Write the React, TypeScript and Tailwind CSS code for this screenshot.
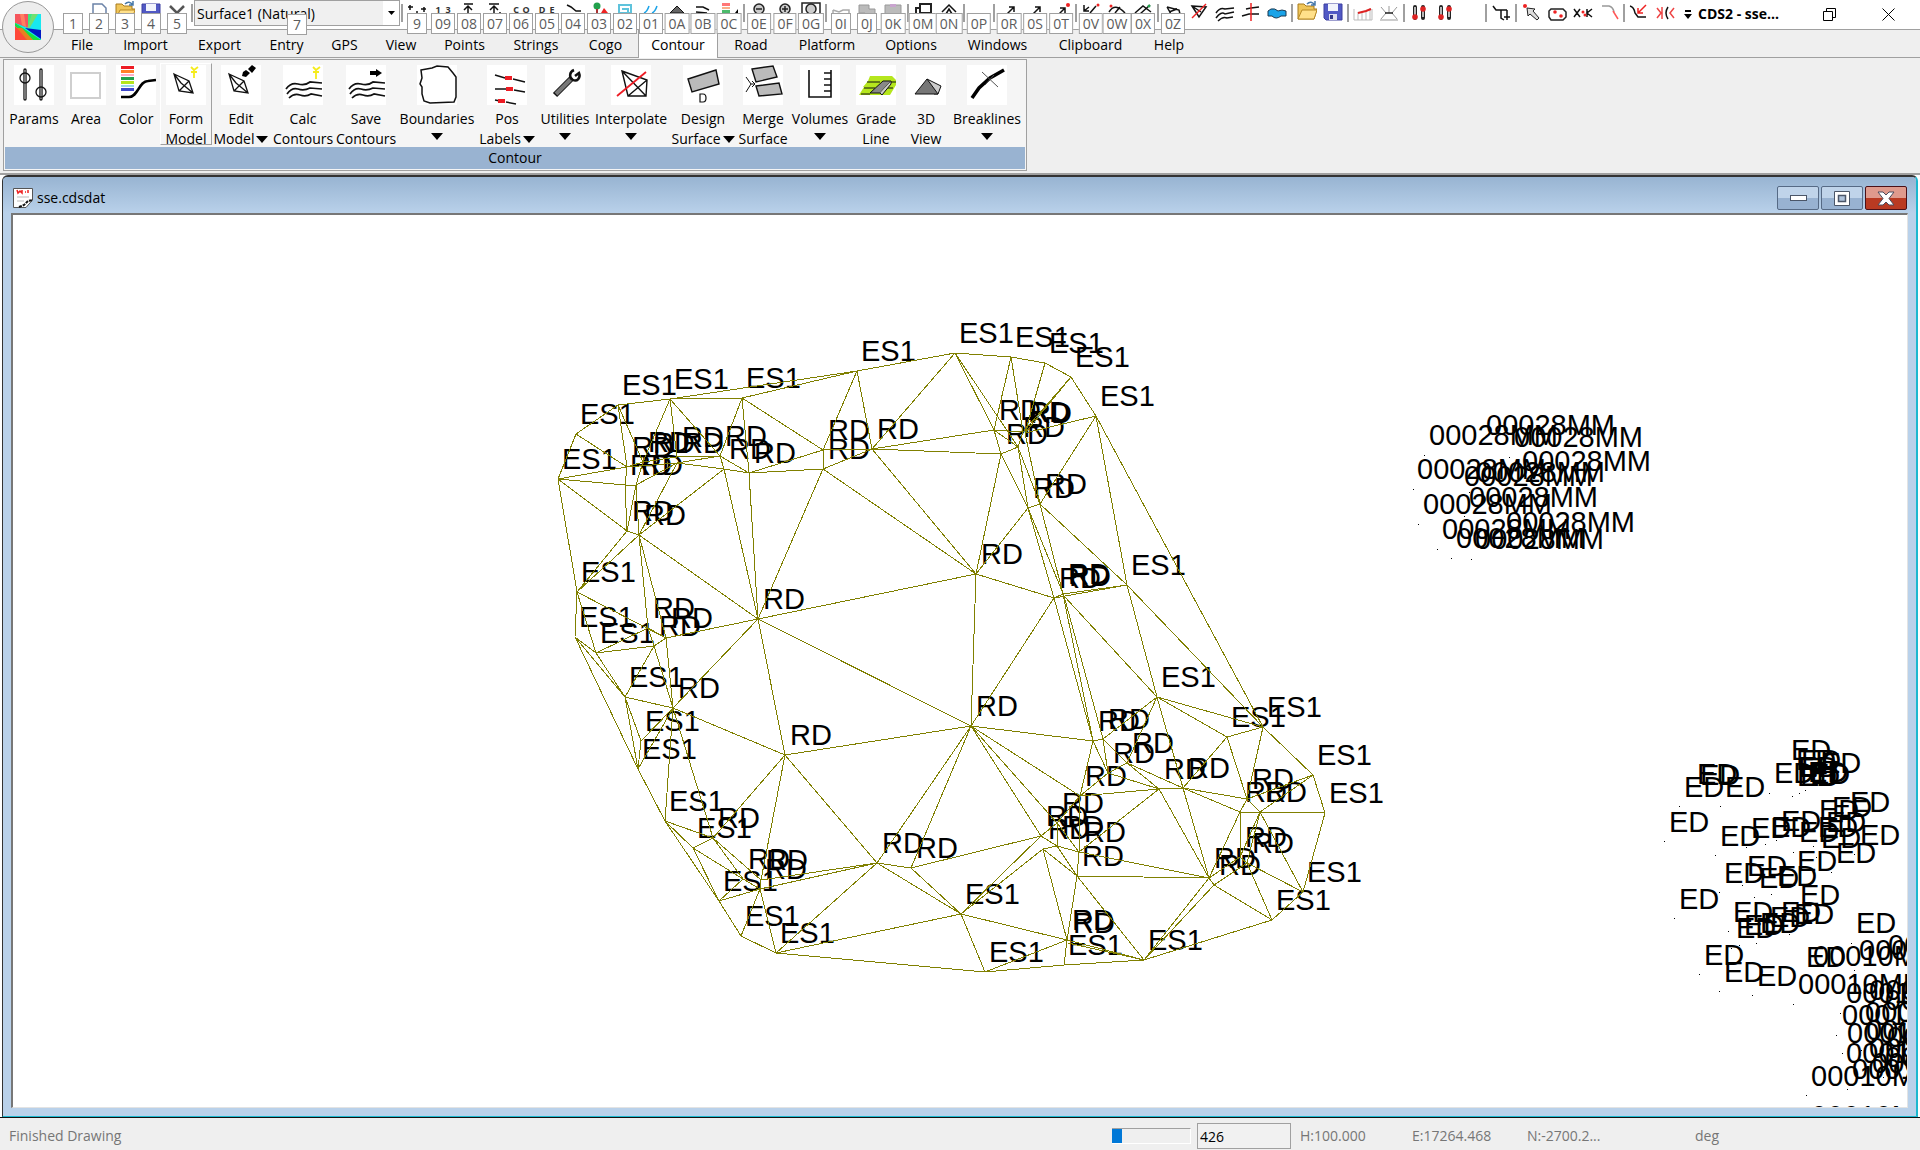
import type { ReactNode } from "react";

type Point = [number, number];

const tabs = [
  { label: "File", width: "w-[52px]" },
  { label: "Import", width: "w-[75px]" },
  { label: "Export", width: "w-[73px]" },
  { label: "Entry", width: "w-[61px]" },
  { label: "GPS", width: "w-[55px]" },
  { label: "View", width: "w-[58px]" },
  { label: "Points", width: "w-[69px]" },
  { label: "Strings", width: "w-[74px]" },
  { label: "Cogo", width: "w-[65px]" },
  { label: "Contour", width: "w-20", active: true },
  { label: "Road", width: "w-[66px]" },
  { label: "Platform", width: "w-[86px]" },
  { label: "Options", width: "w-[82px]" },
  { label: "Windows", width: "w-[91px]" },
  { label: "Clipboard", width: "w-[95px]" },
  { label: "Help", width: "w-[62px]" },
];

const Diamond = () => (
  <path d="M8 9L23 16L27 28L13 26ZM13 26L23 16M15 18L27 28M8 9L15 18" stroke="#111" strokeWidth="1.3" fill="none" />
);

const Contours = () => (
  <path
    d="M3 24Q8 17 15 19T27 17L39 18M4 29Q9 22 15 24T27 23L39 24M6 33Q11 28 17 30T28 29L39 31"
    stroke="#111"
    strokeWidth="1.7"
    fill="none"
  />
);

const Spark = () => <path d="M30 2L33 5L37 2M33 5V14M30 7H36" stroke="#f5ec1c" strokeWidth="1.8" fill="none" />;

type Tool = { lines: string[]; width: string; arrow?: "below" | "side"; raised?: boolean; icon: ReactNode };

const tools: Tool[] = [
  {
    lines: ["Params"],
    width: "w-[52px]",
    icon: (
      <g fill="none" stroke="#111" strokeWidth="1.3">
        <path d="M11 5V34M27 5V34" stroke="#222" strokeWidth="3.4" strokeLinecap="round" />
        <path d="M11 5V34M27 5V34" stroke="#999" strokeWidth="1.4" />
        <circle cx="11" cy="13" r="5" />
        <circle cx="27" cy="27" r="5" />
      </g>
    ),
  },
  { lines: ["Area"], width: "w-[52px]", icon: <rect x="5" y="8" width="29" height="25" fill="none" stroke="#cfcfcf" strokeWidth="2" /> },
  {
    lines: ["Color"],
    width: "w-12",
    icon: (
      <>
        <rect x="5" y="1" width="13" height="3" fill="#ed1c24" />
        <rect x="5" y="5" width="13" height="3" fill="#ff7f27" />
        <rect x="5" y="9" width="13" height="2" fill="#ffaec9" />
        <rect x="5" y="12" width="13" height="3" fill="#22a04c" />
        <rect x="5" y="16" width="13" height="3" fill="#b5e61d" />
        <rect x="5" y="20" width="13" height="2" fill="#99d9ea" />
        <rect x="5" y="23" width="13" height="3" fill="#3f48cc" />
        <path d="M5 32H13C22 32 23 16 32 16L40 15" fill="none" stroke="#000" strokeWidth="2.5" />
      </>
    ),
  },
  { lines: ["Form", "Model"], width: "w-[52px]", raised: true, icon: <><Diamond /><path d="M25 2L28 5L32 2M28 5V13M25 7H31" stroke="#f5ec1c" strokeWidth="1.8" fill="none" /></> },
  {
    lines: ["Edit", "Model"],
    width: "w-[58px]",
    arrow: "side",
    icon: <><Diamond /><path d="M21 11L22 7L25 5L29 8L25 12ZM27 4L31 0L35 3L31 8Z" fill="#000" /></>,
  },
  { lines: ["Calc", "Contours"], width: "w-[66px]", icon: <><Contours /><Spark /></> },
  { lines: ["Save", "Contours"], width: "w-[60px]", icon: <><Contours /><path d="M24 6H30V4L36 8L30 12V10H24Z" fill="#000" /></> },
  {
    lines: ["Boundaries"],
    width: "w-[82px]",
    arrow: "below",
    icon: <path d="M4 5L15 3L20 1L31 2L36 8L39 12V32L37 37L13 38L7 36L5 29V22L3 19L5 13Z" fill="none" stroke="#111" strokeWidth="1.5" />,
  },
  {
    lines: ["Pos", "Labels"],
    width: "w-[58px]",
    arrow: "side",
    icon: (
      <>
        <path d="M8 10L18 13M26 14L38 17M8 24H20M27 25L38 27M8 35L13 36M19 37L29 39" stroke="#111" strokeWidth="1.5" />
        <path d="M18 11H25V15H18ZM19 22H26V26H19ZM11 34H18V38H11Z" fill="#ed1c24" />
      </>
    ),
  },
  {
    lines: ["Utilities"],
    width: "w-[58px]",
    arrow: "below",
    icon: (
      <>
        <path d="M10 30L27 13" stroke="#111" strokeWidth="6" />
        <path d="M11 29L26 14" stroke="#777" strokeWidth="4" />
        <path d="M29 5C24 7 24 13 28 15S36 13 34 8L30 11" fill="none" stroke="#111" strokeWidth="2.5" />
      </>
    ),
  },
  {
    lines: ["Interpolate"],
    width: "w-[74px]",
    arrow: "below",
    icon: (
      <>
        <path d="M11 6L36 15L35 31H17ZM11 6L35 31M17 31L36 15" fill="none" stroke="#111" strokeWidth="1.4" />
        <path d="M6 31L35 7" stroke="#ed1c24" strokeWidth="1.8" />
      </>
    ),
  },
  {
    lines: ["Design", "Surface"],
    width: "w-[70px]",
    arrow: "side",
    icon: (
      <>
        <path d="M5 14L33 5L36 19L9 27Z" fill="#bbb" stroke="#111" strokeWidth="1.4" />
        <path d="M17 29V37H20Q23 37 23 33T20 29Z" fill="none" stroke="#111" strokeWidth="1.2" />
      </>
    ),
  },
  {
    lines: ["Merge", "Surface"],
    width: "w-[50px]",
    icon: (
      <>
        <path d="M9 4L30 1L34 12L13 17ZM13 21L36 18L39 29L16 31Z" fill="#bbb" stroke="#111" strokeWidth="1.4" />
        <path d="M3 12L8 19M3 27L8 19H12M9 16L12 19L9 22" fill="none" stroke="#111" />
      </>
    ),
  },
  {
    lines: ["Volumes"],
    width: "w-16",
    arrow: "below",
    icon: <path d="M9 5V32H31V5M24 8H31M24 14H31M24 20H31M24 26H31" fill="none" stroke="#111" strokeWidth="1.6" />,
  },
  {
    lines: ["Grade", "Line"],
    width: "w-12",
    icon: (
      <>
        <path d="M14 11H36L40 15V20L34 30H3L8 22H7L12 16Z" fill="#b5e61d" />
        <path d="M11 17H24M8 23H19M5 29H14M34 17H40M31 23H37" stroke="#111" />
        <path d="M27 16H35L24 28H14Z" fill="#888" stroke="#111" />
        <path d="M35 16V19L26 30L24 28" fill="#ccc" stroke="#111" />
      </>
    ),
  },
  {
    lines: ["3D", "View"],
    width: "w-[52px]",
    icon: <><path d="M21 14L35 21L32 29L28 29Z" fill="#ccc" stroke="#111" /><path d="M21 14L9 29H32Z" fill="#777" stroke="#111" /></>,
  },
  {
    lines: ["Breaklines"],
    width: "w-[70px]",
    arrow: "below",
    icon: <><path d="M5 33L12 23L23 13L37 5" fill="none" stroke="#000" strokeWidth="3.5" /><path d="M15 7L31 22M18 20L27 10" stroke="#555" /></>,
  },
];

const DownArrow = () => (
  <svg width="12" height="7" viewBox="0 0 12 7" aria-hidden="true" className="shrink-0">
    <path d="M0 0H12L6 7Z" />
  </svg>
);

const line = (d: string, color = "#111") => <path d={d} fill="none" stroke={color} strokeWidth="1.5" />;
const FolderIcon = (
  <>
    <path d="M1 6V19H17L20 9H17V6H9L7 4H1Z" fill="#f0c65a" stroke="#a87b1c" />
    <path d="M1 19L5 10H20L17 19Z" fill="#ffe08a" stroke="#b98a25" />
    <path d="M10 4Q14 0 18 5M18 1V5H14" fill="none" stroke="#4778a8" strokeWidth="1.5" />
  </>
);
const DiskIcon = (
  <>
    <path d="M1 4H19V20H3L1 18Z" fill="#5159c4" stroke="#3c3fa0" />
    <path d="M5 4H15V11H5Z" fill="#f2f4fc" />
    <path d="M6 14H14V20H6Z" fill="#dde" />
    <path d="M7 15H10V19H7Z" fill="#33388a" />
  </>
);
const Glyph = ({ children }: { children: [string, string] }) => (
  <g textAnchor="middle" fontSize="9" fontWeight="700" fill="#333">
    <text x="5" y="13">{children[0]}</text>
    <text x="15" y="13">{children[1]}</text>
  </g>
);
const Sliders = () => (
  <>
    <path d="M6 7V18M14 7V18" stroke="#222" strokeWidth="4" strokeLinecap="round" />
    <path d="M6 7V17M14 7V17" stroke="#ddd" strokeWidth="1.6" />
    <circle cx="6" cy="17" r="2.8" fill="#d22" />
    <circle cx="14" cy="9" r="2.8" fill="#d22" />
  </>
);

type Quick = { tip?: string; name: string; icon?: ReactNode } | "sep";

const fileButtons: Quick[] = [
  { tip: "2", name: "New", icon: <path d="M4 4H13L17 8V20H4Z" fill="#fff" stroke="#6b83a8" strokeWidth="1.5" /> },
  { tip: "3", name: "Open", icon: FolderIcon },
  { tip: "4", name: "Save", icon: DiskIcon },
  { tip: "5", name: "Delete", icon: <path d="M3 6L10 13L17 6M10 13V17" fill="none" stroke="#555" strokeWidth="2.5" /> },
  "sep",
];

const quickButtons: Quick[] = [
  "sep",
  { tip: "9", name: "Points", icon: line("M1 7H6M3 5V10M14 9H19M17 7V12M9 12H11") },
  { tip: "09", name: "Point numbers", icon: <Glyph>{["1", "3"]}</Glyph> },
  { tip: "08", name: "Heights", icon: line("M5 4H14M9 6V18M5 10L9 6L13 10") },
  { tip: "07", name: "Height labels", icon: line("M4 4H14M9 6V18M5 10L9 6L13 10M15 12V16") },
  { tip: "06", name: "Codes", icon: <Glyph>{["C", "O"]}</Glyph> },
  { tip: "05", name: "Descriptions", icon: <Glyph>{["D", "E"]}</Glyph> },
  { tip: "04", name: "Strings", icon: line("M4 5L8 7L13 11H18") },
  { tip: "03", name: "Symbols", icon: <><circle cx="8" cy="6" r="3.5" fill="#22a04c" /><path d="M7 9H9V13H7Z" fill="#a33" /><path d="M15 8L19 13H12Z" fill="#e22" /></> },
  { tip: "02", name: "Image", icon: <path d="M4 5H16V13H4ZM7 9H13V13" fill="none" stroke="#5fc3dc" strokeWidth="2" /> },
  { tip: "01", name: "Water", icon: line("M3 13Q6 12 8 6M11 13Q14 12 16 6", "#1aa3e8") },
  { tip: "0A", name: "Triangles", icon: <path d="M10 6L17 13H3Z" fill="#666" stroke="#111" /> },
  { tip: "0B", name: "Contour lines", icon: line("M3 7H10L16 10M3 12L14 13") },
  { tip: "0C", name: "Colors", icon: <><path d="M3 3H11V6H3Z" fill="#f77" /><path d="M3 7H11V9H3Z" fill="#f9b08a" /><path d="M3 10H11V13H3Z" fill="#4cbb6c" /><path d="M16 13L19 9V13Z" /></> },
  "sep",
  { tip: "0E", name: "Zoom out", icon: <g fill="#ccc" stroke="#222" strokeWidth="1.5"><circle cx="10" cy="9" r="5" /><path d="M7 9H13" /></g> },
  { tip: "0F", name: "Zoom in", icon: <g fill="#ccc" stroke="#222" strokeWidth="1.5"><circle cx="10" cy="9" r="5" /><path d="M7 9H13M10 6V12" /></g> },
  { tip: "0G", name: "Zoom all", icon: <g fill="none" stroke="#222" strokeWidth="1.5"><path d="M1 3H19V16H1Z" /><circle cx="10" cy="9" r="5" fill="#ccc" /></g> },
  "sep",
  { tip: "0I", name: "Cut", icon: line("M2 10V13M2 10L8 12L12 10H18V13", "#aaa") },
  { tip: "0J", name: "Copy", icon: <path d="M2 5H12V9H18V18H8V13H2Z" fill="#bbb" stroke="#999" /> },
  { tip: "0K", name: "Paste", icon: <><path d="M2 5H18V18H2Z" fill="#bbb" stroke="#999" /><path d="M7 4H13V7H7Z" fill="#c9a4cf" /></> },
  "sep",
  { tip: "0M", name: "Windows", icon: <path d="M7 4H18V13H7ZM7 8H3V16" fill="none" stroke="#222" strokeWidth="2" /> },
  { tip: "0N", name: "Home", icon: line("M3 12L10 5L17 12M7 14L10 9L13 14") },
  "sep",
  { tip: "0P", name: "Redraw" },
  "sep",
  { tip: "0R", name: "Line", icon: line("M8 14L15 7M10 7H15V12") },
  { tip: "0S", name: "Arrow", icon: line("M8 14L15 7M10 7H15V12") },
  { tip: "0T", name: "Point to point", icon: <>{line("M6 16L14 8M9 8H14V13")}<circle cx="17" cy="5" r="2" fill="#e22" /></> },
  "sep",
  { tip: "0V", name: "Join", icon: <>{line("M3 5V11H8M3 11L8 7M9 13L15 6")}<circle cx="17" cy="5" r="1.5" fill="#e22" /></> },
  { tip: "0W", name: "Curve", icon: <>{line("M2 12Q8 2 18 13M8 13L13 7")}<circle cx="4" cy="6" r="1.5" fill="#e22" /></> },
  { tip: "0X", name: "Offset", icon: <>{line("M2 13L10 6L18 12M7 14L17 5")}<circle cx="16" cy="6" r="1.5" fill="#22a04c" /></> },
  "sep",
  { tip: "0Z", name: "Model", icon: line("M4 7L16 10L17 14M4 7L8 14M6 12L14 9") },
  { name: "Remove model", icon: <>{line("M3 6L17 7L10 17ZM3 6L12 12")}<path d="M3 18L17 4" stroke="#e22" strokeWidth="1.5" /></> },
  { name: "Contours", icon: line("M1 13Q5 7 10 9L19 8M1 18Q6 11 10 14L19 12M3 21Q8 16 12 18L18 17") },
  { name: "Section", icon: <>{line("M1 16L8 14H18M5 9L10 8L18 7")}<path d="M10 3V21" stroke="#e22" strokeWidth="1.5" /></> },
  { name: "Swap", icon: <path d="M1 11L4 9Q8 8 11 11L15 10L19 11V16H14Q9 20 5 16H1Z" fill="#1aa3e8" stroke="#1b3850" /> },
  "sep",
  { name: "Open job", icon: FolderIcon },
  { name: "Save job", icon: DiskIcon },
  "sep",
  { name: "Long section", icon: <><path d="M1 9V20H19V9M5 12V20M9 12V20M13 10V20M17 8V20" fill="none" stroke="#bbb" /><path d="M5 13L9 12L13 11L18 9" fill="none" stroke="#d22" strokeWidth="2" /></> },
  { name: "Cross section", icon: <><path d="M2 7L7 13L2 19M18 7L13 13L18 19M10 6V13M1 20H19" fill="none" stroke="#999" /><path d="M6 13H14" stroke="#222" strokeWidth="1.5" /></> },
  "sep",
  { name: "Adjust down", icon: <Sliders /> },
  { name: "Adjust up", icon: <Sliders /> },
  { name: "Blank" },
  "sep",
  { name: "Tee", icon: line("M2 6L5 10H16M10 10V18L13 20M16 10V14M13 17H19M16 14V20") },
  "sep",
  { name: "Pick", icon: <><circle cx="4" cy="6" r="2" fill="#e22" /><path d="M6 8L14 9L12 11L18 18L16 20L9 14L7 16Z" fill="#ddd" stroke="#222" /></> },
  { name: "Polygon", icon: <><path d="M4 9H16L19 12V17L16 20H4L2 17V11Z" fill="none" stroke="#222" strokeWidth="1.5" /><circle cx="8" cy="12" r="1.8" fill="#e22" /><circle cx="14" cy="16" r="1.8" fill="#e22" /></> },
  { name: "Trim", icon: <>{line("M1 9L4 13L1 17M7 9L4 13L7 17M14 9V17M19 9L14 13L19 17")}<circle cx="10" cy="12" r="1.5" fill="#e22" /><circle cx="12" cy="15" r="1.5" fill="#e22" /></> },
  { name: "Fillet", icon: <>{line("M3 6H10Q14 7 15 12", "#999")}{line("M14 11L19 19", "#f55")}</> },
  "sep",
  { name: "Snap", icon: <>{line("M1 6Q5 7 6 13L9 17H17")}{line("M17 5L9 13M9 8V13H14", "#e22")}</> },
  { name: "Mirror", icon: <>{line("M2 8L6 13L2 18M7 7V19M19 8L15 13L19 18", "#e44")}{line("M13 7Q9 13 13 19")}</> },
];

const KeyTip = ({ children }: { children: string }) => (
  <span className="absolute top-[13px] left-1/2 z-10 flex h-[21px] min-w-5 -translate-x-1/2 items-center justify-center border border-[#a0a0a0] bg-white px-[3px] text-sm text-[#5c5c5c]">
    {children}
  </span>
);

const QuickItem = ({ item }: { item: Quick }) =>
  item === "sep" ? (
    <span className="flex h-[29px] w-1 shrink-0 justify-center pt-1">
      <span className="h-[18px] w-0.5 bg-[#a0a0a0]" />
    </span>
  ) : (
    <button type="button" aria-label={item.name} className="relative flex h-[29px] w-[26px] shrink-0 justify-center">
      <svg width="20" height="22" viewBox="0 0 20 22" aria-hidden="true">{item.icon}</svg>
      {item.tip && <KeyTip>{item.tip}</KeyTip>}
    </button>
  );

const edgeShots: Point[] = [
  [558, 479], [576, 434], [618, 405], [670, 399], [742, 398], [857, 371], [955, 353], [1011, 357], [1045, 363], [1071, 377],
  [1096, 416], [1127, 585], [1157, 697], [1227, 737], [1263, 727], [1313, 775], [1325, 813], [1303, 892], [1272, 920], [1144, 960],
  [1064, 965], [985, 972], [961, 914], [776, 953], [741, 936], [719, 901], [693, 848], [665, 821], [638, 769], [641, 741],
  [625, 697], [596, 653], [575, 637], [577, 592],
];

const roadShots: Point[] = [
  [627, 467], [625, 485], [636, 485], [627, 531], [639, 535], [643, 462], [648, 463], [677, 457], [677, 463], [720, 456],
  [724, 469], [749, 473], [823, 450], [823, 469], [872, 449], [994, 430], [1001, 454], [1018, 447], [1023, 432], [1025, 433],
  [1028, 508], [1040, 504], [976, 574], [1054, 598], [1063, 594], [1064, 596], [758, 619], [648, 628], [666, 638], [654, 646],
  [673, 708], [785, 755], [971, 726], [713, 838], [743, 879], [761, 880], [760, 889], [877, 863], [911, 868], [1093, 741],
  [1103, 739], [1108, 773], [1127, 763], [1080, 796], [1159, 789], [1183, 788], [1247, 799], [1240, 812], [1260, 812], [1057, 823],
  [1041, 836], [1043, 849], [1057, 846], [1079, 852], [1077, 876], [1209, 878], [1214, 885], [1240, 857], [1247, 863], [1067, 940],
  [1068, 943],
];

const vertices = [...edgeShots, ...roadShots];

// Pairs of indices into vertices: 0-33 are edge shots, 34 and up are road shots
const links =
  "0-1 1-2 2-3 3-5 3-4 4-5 5-6 6-7 7-8 8-9 9-10 10-14 10-11 11-12 11-14 14-15 15-16 16-17 17-18 18-19 19-20 20-21 21-23 23-24 24-25 25-27 27-28 28-32 32-33 33-0 " +
  "27-26 26-25 0-34 0-35 0-37 1-34 2-34 2-39 3-39 3-41 3-43 4-43 4-45 4-46 5-46 5-48 6-48 6-49 6-51 34-35 35-36 36-39 34-39 39-41 41-43 42-44 42-36 42-38 " +
  "35-37 36-37 36-38 37-38 37-33 38-33 38-44 38-60 38-61 38-62 33-62 33-31 32-31 32-30 31-30 31-63 31-61 61-63 62-63 61-62 62-60 63-30 63-64 62-64 30-64 30-29 " +
  "30-28 29-28 29-64 28-64 64-27 64-67 64-65 64-60 60-65 60-66 60-56 60-44 60-45 60-47 43-44 43-45 44-45 45-46 45-47 46-47 46-48 47-48 47-56 48-56 48-49 48-50 " +
  "43-42 34-42 49-50 49-51 49-52 7-49 7-52 8-53 9-53 9-52 10-53 52-51 50-51 50-56 50-54 51-54 51-55 53-55 10-55 54-55 54-56 54-57 54-59 55-58 55-11 56-57 56-66 " +
  "57-58 58-11 57-11 57-66 57-73 58-73 59-74 59-12 66-73 66-77 66-83 66-84 66-71 66-72 65-66 65-67 65-69 65-71 67-27 67-26 67-68 67-69 68-26 68-25 68-70 69-71 " +
  "70-71 70-25 70-24 70-23 69-70 71-72 71-22 71-23 72-84 72-22 22-23 22-21 22-84 22-85 22-93 21-93 93-20 93-19 94-19 85-93 88-93 88-19 88-89 88-85 88-86 88-87 " +
  "87-89 87-77 87-78 87-83 83-84 83-86 84-86 85-86 86-87 83-77 77-73 77-75 77-78 73-74 73-75 74-75 74-76 74-12 75-76 75-78 76-12 76-78 76-79 78-79 78-89 79-12 " +
  "79-13 79-80 79-81 79-89 12-13 12-14 13-14 13-80 14-80 80-15 80-81 80-82 82-15 81-82 82-16 81-91 81-89 82-91 82-92 82-17 91-89 92-90 91-92 92-17 92-18 " +
  "90-18 89-90 89-19 90-19";

const meshPath = links
  .split(" ")
  .map((pair) => {
    const [a, b] = pair.split("-").map((n) => vertices[Number(n)]);
    return `M${a[0]} ${a[1]}L${b[0]} ${b[1]}`;
  })
  .join("");

// Label origins for shots outside the surface
const gum28: Point[] = [
  [1486, 435], [1429, 445], [1514, 447], [1522, 471], [1417, 479], [1464, 486], [1476, 482], [1469, 507], [1423, 514], [1506, 532],
  [1442, 539], [1456, 548], [1475, 549],
];

const ed: Point[] = [
  [1791, 760], [1796, 770], [1801, 770], [1821, 773], [1774, 783], [1798, 777], [1797, 786], [1800, 786], [1808, 782], [1810, 784],
  [1697, 784], [1700, 785], [1684, 797], [1725, 797], [1669, 832], [1720, 846], [1751, 838], [1771, 837], [1781, 831], [1799, 842],
  [1819, 820], [1832, 817], [1850, 812], [1818, 837], [1826, 832], [1821, 848], [1860, 845], [1836, 863], [1747, 876], [1724, 883],
  [1797, 871], [1759, 888], [1777, 886], [1679, 909], [1800, 905], [1733, 922], [1794, 924], [1736, 938], [1744, 935], [1760, 933],
  [1770, 927], [1856, 933], [1806, 967], [1704, 965], [1724, 982], [1757, 986], [1781, 922],
];

const gum10: Point[] = [
  [1813, 966], [1859, 960], [1888, 955], [1798, 994], [1846, 1003], [1869, 1000], [1842, 1025], [1865, 1022], [1847, 1043], [1866, 1040],
  [1846, 1063], [1869, 1058], [1852, 1079], [1872, 1073], [1811, 1086], [1811, 1126], [1885, 1010], [1887, 1047], [1885, 1067],
];

const dots: Point[] = [
  [1424, 455], [1509, 457], [1413, 489], [1469, 492], [1464, 516], [1418, 524], [1437, 549], [1451, 558], [1471, 559],
  [1679, 806], [1720, 806], [1769, 793], [1792, 796], [1799, 793], [1805, 790], [1664, 841], [1715, 855], [1746, 847], [1765, 844],
  [1776, 840], [1793, 852], [1813, 846], [1816, 857], [1831, 872], [1854, 854], [1742, 885], [1719, 892], [1754, 897], [1771, 894],
  [1674, 918], [1728, 931], [1789, 934], [1731, 948], [1739, 945], [1756, 943], [1699, 974], [1719, 991], [1752, 995], [1793, 1004],
  [1851, 943], [1854, 970], [1840, 1013], [1836, 1035], [1842, 1053], [1861, 1050], [1847, 1089], [1806, 1095], [1883, 1077],
];

const Labels = ({ points, text, dx = 0, dy = 0 }: { points: Point[]; text: string; dx?: number; dy?: number }) => (
  <>
    {points.map(([x, y], i) => (
      <text key={i} x={x + dx} y={y + dy}>{text}</text>
    ))}
  </>
);

const SurfacePlot = () => (
  <svg className="block h-full w-full" role="img" aria-label="Surface model">
    <g transform="translate(-13 -215)">
      <g fontFamily="'Liberation Sans', Arial, sans-serif" fontSize="29" fill="#000">
        <Labels points={edgeShots} text="ES1" dx={4} dy={-10} />
        <Labels points={roadShots} text="RD" dx={5} dy={-10} />
        <Labels points={gum28} text="00028MM" />
        <Labels points={ed} text="ED" />
        <Labels points={gum10} text="00010MM" />
      </g>
      {dots.map(([x, y], i) => (
        <rect key={i} x={x} y={y} width="1" height="1" />
      ))}
      <path d={meshPath} fill="none" stroke="#808000" strokeWidth="1" shapeRendering="crispEdges" />
    </g>
  </svg>
);

const TitleBar = () => (
  <header className="relative flex h-[30px] shrink-0 items-start border-b border-[#a0a0a0] bg-white pr-1 pl-[60px]">
    <span className="relative h-[29px] w-[26px] shrink-0">
      <KeyTip>1</KeyTip>
    </span>
    {fileButtons.map((item, i) => (
      <QuickItem key={i} item={item} />
    ))}
    <div className="relative h-[26px] w-[206px] shrink-0 border border-[#a0a0a0] bg-[#f0f0f0]">
      <select aria-label="Surface" className="h-full w-full appearance-none bg-transparent pl-0.5 text-sm outline-none">
        <option>Surface1 (Natural)</option>
      </select>
      <span className="pointer-events-none absolute inset-y-0 right-0 flex w-4 items-center justify-center bg-white">
        <svg width="7" height="4" viewBox="0 0 7 4" aria-hidden="true"><path d="M0 0H7L3.5 4Z" /></svg>
      </span>
      <KeyTip>7</KeyTip>
    </div>
    {quickButtons.map((item, i) => (
      <QuickItem key={i} item={item} />
    ))}
    <button type="button" aria-label="Customize toolbar" className="flex h-[29px] w-5 shrink-0 items-center justify-center">
      <svg width="8" height="9" viewBox="0 0 8 9" aria-hidden="true"><path d="M1 0H7V2H1ZM0 4H8L4 9Z" /></svg>
    </button>
    <h1 className="h-[29px] w-24 shrink-0 text-sm leading-[27px] font-bold">CDS2 - sse...</h1>
    <button type="button" aria-label="Restore" className="ml-auto flex h-[29px] w-[62px] shrink-0 items-center justify-center">
      <svg width="13" height="13" viewBox="0 0 13 13" fill="none" stroke="#000" aria-hidden="true"><path d="M0.5 3.5H9.5V12.5H0.5ZM3.5 3V0.5H12.5V9.5H10" /></svg>
    </button>
    <button type="button" aria-label="Close" className="flex h-[29px] w-14 shrink-0 items-center justify-center">
      <svg width="13" height="13" viewBox="0 0 13 13" stroke="#000" aria-hidden="true"><path d="M0.5 0.5L12.5 12.5M12.5 0.5L0.5 12.5" /></svg>
    </button>
    <button type="button" aria-label="Application menu" className="absolute top-px left-0.5 z-20 flex size-[52px] items-center justify-center rounded-full border border-[#999] bg-[#ededed]">
      <svg width="26" height="26" viewBox="0 0 26 26" aria-hidden="true">
        <path d="M0 0H26V26H0Z" fill="#18e8f0" />
        <path d="M0 0H13V15L0 9Z" fill="#f5555c" />
        <path d="M5 0H9L11 13L7 11Z" fill="#ff8060" />
        <path d="M13 0H17L13 14Z" fill="#3fe87a" />
        <path d="M17 0H23L14 15H12Z" fill="#70e070" />
        <path d="M0 9L12 14L26 23V26H18L0 12Z" fill="#18e040" />
        <path d="M0 12L16 26H0Z" fill="#ff4838" />
        <path d="M7 14L18 26H12L2 14Z" fill="#e88020" />
        <path d="M0 9L26 19V26L8 14Z" fill="#18e8f0" />
        <path d="M10 14L26 16V25Z" fill="#0018c4" />
      </svg>
    </button>
  </header>
);

const Tabs = () => (
  <nav className="flex h-7 shrink-0 border-b border-[#a0a0a0] bg-[#efefef] pl-14 text-sm">
    {tabs.map((tab) => (
      <button
        key={tab.label}
        type="button"
        className={`${tab.width} shrink-0 text-center leading-[29px] whitespace-nowrap ${
          tab.active ? "-mb-px border-x border-[#a0a0a0] bg-white" : ""
        }`}
      >
        {tab.label}
      </button>
    ))}
  </nav>
);

const ToolButton = ({ tool }: { tool: Tool }) => (
  <button
    type="button"
    className={`${tool.width} flex shrink-0 flex-col items-center overflow-y-clip border text-sm leading-5 whitespace-nowrap ${
      tool.raised ? "h-[82px] border-t-white border-r-[#a0a0a0] border-b-[#a0a0a0] border-l-white" : "h-[84px] border-transparent"
    }`}
  >
    <svg width="40" height="40" viewBox="0 0 40 40" aria-hidden="true" className="mt-px mb-1 shrink-0 bg-white">
      {tool.icon}
    </svg>
    <span>{tool.lines[0]}</span>
    {tool.lines[1] && (
      <span className="flex items-center gap-0.5">
        {tool.lines[1]}
        {tool.arrow === "side" && <DownArrow />}
      </span>
    )}
    {tool.arrow === "below" && (
      <span className="mt-1">
        <DownArrow />
      </span>
    )}
  </button>
);

const Ribbon = () => (
  <section className="flex shrink-0 items-start border-b-2 border-[#a0a0a0] bg-[#efefef] pt-px pb-0.5 pl-[3px]">
    <div className="border border-[#a0a0a0] bg-[#f5f5f5] p-px">
      <div className="flex px-[3px] pt-0.5">
        {tools.map((tool, i) => (
          <ToolButton key={i} tool={tool} />
        ))}
      </div>
      <h2 className="h-[22px] bg-[#99b3d1] text-center text-sm leading-[22px]">Contour</h2>
    </div>
  </section>
);

const frameButton = "flex h-6 w-[42px] items-center justify-center rounded-xs border border-[#566a85] bg-linear-to-b from-[#c0d4ea] from-50% to-[#98b2d1] to-50%";

const DrawingWindow = () => (
  <main className="flex min-h-0 flex-1 flex-col bg-white px-0.5">
    <div className="flex min-h-0 flex-1 flex-col rounded-t-md border-t-2 border-r-2 border-b border-l border-t-[#333] border-r-[#1bb8cf] border-b-[#1bb8cf] border-l-[#333] bg-[#b9d1ea] px-2 pb-2">
      <div className="-mx-2 flex h-9 shrink-0 items-center rounded-t bg-linear-to-b from-[#98b4d2] to-[#b9d1ea] pt-1.5 pr-[9px] pl-2">
        <svg width="20" height="20" viewBox="0 0 20 20" aria-hidden="true" className="mr-1 ml-0.5">
          <path d="M0.5 0.5H19.5V12L13 19.5H0.5Z" fill="#fff" stroke="#555" />
          <path d="M4 2L5 5L7 3L9 5V2M12 4H13M15 2V5" stroke="#e22" fill="none" strokeWidth="1.5" />
          <path d="M4 9H16M4 13H11" stroke="#bbb" />
          <path d="M6 19L11 17L15 13L20 12" fill="none" stroke="#111" strokeWidth="2" strokeDasharray="3 1" />
        </svg>
        <h2 className="flex-1 text-sm">sse.cdsdat</h2>
        <div className="flex gap-0.5">
          <button type="button" aria-label="Minimize drawing" className={frameButton}>
            <svg width="17" height="6" viewBox="0 0 17 6" aria-hidden="true"><rect x="0.5" y="0.5" width="16" height="5" fill="#fff" stroke="#4b5668" /></svg>
          </button>
          <button type="button" aria-label="Maximize drawing" className={frameButton}>
            <svg width="16" height="15" viewBox="0 0 16 15" fill="#fff" stroke="#4b5668" aria-hidden="true">
              <path d="M0.5 0.5H15.5V14.5H0.5Z" />
              <path d="M4.5 4.5H11.5V10.5H4.5Z" fill="#aec3dc" strokeWidth="1.5" />
            </svg>
          </button>
          <button
            type="button"
            aria-label="Close drawing"
            className="flex h-6 w-[42px] items-center justify-center rounded-xs border border-[#4b1017] bg-linear-to-b from-[#df9a8d] from-50% to-[#b93a22] to-50%"
          >
            <svg width="18" height="15" viewBox="0 0 18 15" aria-hidden="true">
              <path d="M1 1H6L9 4L12 1H17L12 7.5L17 14H12L9 11L6 14H1L6 7.5Z" fill="#fff" stroke="#4b4b5c" />
            </svg>
          </button>
        </div>
      </div>
      <div className="min-h-0 flex-1 overflow-hidden border-t-2 border-r border-b border-l-2 border-t-[#777] border-r-[#e3e3e3] border-b-[#e3e3e3] border-l-[#777] bg-white">
        <SurfacePlot />
      </div>
    </div>
  </main>
);

const StatusBar = () => (
  <footer className="flex h-[33px] shrink-0 items-center border-t border-[#111] bg-[#efefef] pt-1 pl-[9px] text-sm text-[#767676]">
    <span className="flex-1">Finished Drawing</span>
    <div role="progressbar" aria-label="Drawing progress" aria-valuenow={13} className="mr-1.5 h-4 w-[79px] border-t border-r border-b border-t-[#a0a0a0] border-r-white border-b-white">
      <div className="h-full bg-[#0078d7]" style={{ width: "13%" }} />
    </div>
    <input aria-label="Point count" defaultValue="426" className="mr-[9px] h-[26px] w-[94px] border border-[#a0a0a0] bg-[#f1f1f1] pl-0.5 text-black outline-none" />
    <span className="w-28">H:100.000</span>
    <span className="w-[115px]">E:17264.468</span>
    <span className="w-[168px]">N:-2700.2...</span>
    <span className="w-[225px]">deg</span>
  </footer>
);

export default function App() {
  return (
    <div className="flex h-screen flex-col overflow-hidden bg-[#efefef] font-['Open_Sans','Noto_Sans',sans-serif] text-black">
      <TitleBar />
      <Tabs />
      <Ribbon />
      <DrawingWindow />
      <StatusBar />
    </div>
  );
}
